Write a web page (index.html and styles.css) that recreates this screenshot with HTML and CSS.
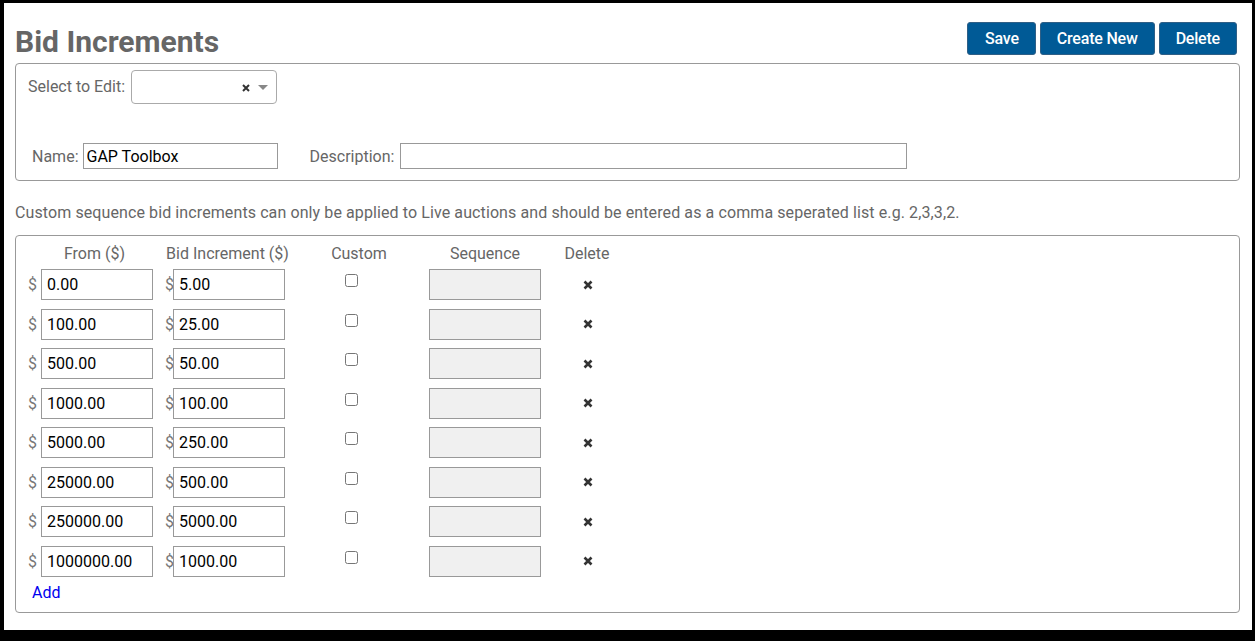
FILE: index.html
```html
<!DOCTYPE html>
<html>
<head>
<meta charset="utf-8">
<link rel="stylesheet" href="styles.css">
</head>
<body>
<div class="page">
  <div class="header">
    <h1 class="title">Bid Increments</h1>
    <div class="actions">
      <button class="btn btn-save">Save</button>
      <button class="btn">Create New</button>
      <button class="btn">Delete</button>
    </div>
  </div>

  <div class="panel panel-top">
    <div class="select-row">
      <span class="label">Select to Edit:</span>
      <div class="select">
        <svg class="clear" width="8" height="8" viewBox="0 0 8 8"><path d="M1 1L7 7M7 1L1 7" stroke="#333" stroke-width="2"/></svg>
        <span class="caret"></span>
      </div>
    </div>
    <div class="name-row">
      <span class="label">Name:</span>
      <input class="field name-field" type="text" value="GAP Toolbox">
      <span class="label desc-label">Description:</span>
      <input class="field desc-field" type="text" value="">
    </div>
  </div>

  <p class="note">Custom sequence bid increments can only be applied to Live auctions and should be entered as a comma seperated list e.g. 2,3,3,2.</p>

  <div class="panel panel-table">
    <div class="grid-row head">
      <div class="th">From ($)</div>
      <div class="th">Bid Increment ($)</div>
      <div class="th">Custom</div>
      <div class="th">Sequence</div>
      <div class="th">Delete</div>
    </div>
    <div class="rows">
      <div class="grid-row">
        <div class="cell c1"><span class="cur">$</span><input class="field num" value="0.00"></div>
        <div class="cell c2"><span class="cur">$</span><input class="field num" value="5.00"></div>
        <div class="cell c3"><input type="checkbox" class="chk"></div>
        <div class="cell c4"><input class="field seq" disabled></div>
        <div class="cell c5"><svg width="10" height="10" viewBox="0 0 10 10"><path d="M1.5 1.5L8.5 8.5M8.5 1.5L1.5 8.5" stroke="#333" stroke-width="2.6"/></svg></div>
      </div>
      <div class="grid-row">
        <div class="cell c1"><span class="cur">$</span><input class="field num" value="100.00"></div>
        <div class="cell c2"><span class="cur">$</span><input class="field num" value="25.00"></div>
        <div class="cell c3"><input type="checkbox" class="chk"></div>
        <div class="cell c4"><input class="field seq" disabled></div>
        <div class="cell c5"><svg width="10" height="10" viewBox="0 0 10 10"><path d="M1.5 1.5L8.5 8.5M8.5 1.5L1.5 8.5" stroke="#333" stroke-width="2.6"/></svg></div>
      </div>
      <div class="grid-row">
        <div class="cell c1"><span class="cur">$</span><input class="field num" value="500.00"></div>
        <div class="cell c2"><span class="cur">$</span><input class="field num" value="50.00"></div>
        <div class="cell c3"><input type="checkbox" class="chk"></div>
        <div class="cell c4"><input class="field seq" disabled></div>
        <div class="cell c5"><svg width="10" height="10" viewBox="0 0 10 10"><path d="M1.5 1.5L8.5 8.5M8.5 1.5L1.5 8.5" stroke="#333" stroke-width="2.6"/></svg></div>
      </div>
      <div class="grid-row">
        <div class="cell c1"><span class="cur">$</span><input class="field num" value="1000.00"></div>
        <div class="cell c2"><span class="cur">$</span><input class="field num" value="100.00"></div>
        <div class="cell c3"><input type="checkbox" class="chk"></div>
        <div class="cell c4"><input class="field seq" disabled></div>
        <div class="cell c5"><svg width="10" height="10" viewBox="0 0 10 10"><path d="M1.5 1.5L8.5 8.5M8.5 1.5L1.5 8.5" stroke="#333" stroke-width="2.6"/></svg></div>
      </div>
      <div class="grid-row">
        <div class="cell c1"><span class="cur">$</span><input class="field num" value="5000.00"></div>
        <div class="cell c2"><span class="cur">$</span><input class="field num" value="250.00"></div>
        <div class="cell c3"><input type="checkbox" class="chk"></div>
        <div class="cell c4"><input class="field seq" disabled></div>
        <div class="cell c5"><svg width="10" height="10" viewBox="0 0 10 10"><path d="M1.5 1.5L8.5 8.5M8.5 1.5L1.5 8.5" stroke="#333" stroke-width="2.6"/></svg></div>
      </div>
      <div class="grid-row">
        <div class="cell c1"><span class="cur">$</span><input class="field num" value="25000.00"></div>
        <div class="cell c2"><span class="cur">$</span><input class="field num" value="500.00"></div>
        <div class="cell c3"><input type="checkbox" class="chk"></div>
        <div class="cell c4"><input class="field seq" disabled></div>
        <div class="cell c5"><svg width="10" height="10" viewBox="0 0 10 10"><path d="M1.5 1.5L8.5 8.5M8.5 1.5L1.5 8.5" stroke="#333" stroke-width="2.6"/></svg></div>
      </div>
      <div class="grid-row">
        <div class="cell c1"><span class="cur">$</span><input class="field num" value="250000.00"></div>
        <div class="cell c2"><span class="cur">$</span><input class="field num" value="5000.00"></div>
        <div class="cell c3"><input type="checkbox" class="chk"></div>
        <div class="cell c4"><input class="field seq" disabled></div>
        <div class="cell c5"><svg width="10" height="10" viewBox="0 0 10 10"><path d="M1.5 1.5L8.5 8.5M8.5 1.5L1.5 8.5" stroke="#333" stroke-width="2.6"/></svg></div>
      </div>
      <div class="grid-row">
        <div class="cell c1"><span class="cur">$</span><input class="field num" value="1000000.00"></div>
        <div class="cell c2"><span class="cur">$</span><input class="field num" value="1000.00"></div>
        <div class="cell c3"><input type="checkbox" class="chk"></div>
        <div class="cell c4"><input class="field seq" disabled></div>
        <div class="cell c5"><svg width="10" height="10" viewBox="0 0 10 10"><path d="M1.5 1.5L8.5 8.5M8.5 1.5L1.5 8.5" stroke="#333" stroke-width="2.6"/></svg></div>
      </div>
    </div>
    <a class="add" href="#">Add</a>
  </div>
</div>
</body>
</html>
```

FILE: styles.css
```css
html, body {
  margin: 0;
  padding: 0;
  background: #000;
}
body {
  font-family: Roboto, "Liberation Sans", Arial, sans-serif;
  color: #666;
  font-size: 16px;
}
.page {
  background: #fff;
  margin: 3px 3px 0 4px;
  height: 627px;
  padding: 19px 12px 0 11px;
  box-sizing: border-box;
}
.header {
  display: flex;
  justify-content: space-between;
  align-items: flex-start;
  height: 33px;
}
.title {
  margin: 3px 0 0 0;
  font-size: 30px;
  line-height: 33px;
  font-weight: 700;
  color: #666;
}
.actions {
  display: flex;
  gap: 4px;
  margin-right: 3px;
}
.btn {
  height: 33px;
  padding: 0 16px;
  background: #005a96;
  border: 1px solid #2f5f86;
  border-radius: 3px;
  color: #fff;
  font-family: Roboto, "Liberation Sans", Arial, sans-serif;
  font-size: 16px;
  font-weight: 500;
  letter-spacing: -0.2px;
}
.btn-save {
  padding: 0 16px 0 17px;
}
.panel {
  border: 1px solid #999;
  border-radius: 4px;
}
.panel-top {
  margin-top: 8px;
  height: 118px;
  box-sizing: border-box;
  padding: 6px 12px 0 12px;
}
.select-row {
  display: flex;
  align-items: center;
}
.label {
  color: #666;
  line-height: 19px;
}
.select-row .label {
  margin-top: -1px;
}
.select {
  margin-left: 6px;
  width: 146px;
  height: 34px;
  box-sizing: border-box;
  border: 1px solid #aaa;
  border-radius: 4px;
  display: flex;
  align-items: center;
  justify-content: flex-end;
  padding-right: 8px;
}
.clear {
  margin-right: 8px;
  margin-top: 2px;
}
.caret {
  width: 0;
  height: 0;
  border-left: 5px solid transparent;
  border-right: 5px solid transparent;
  border-top: 5px solid #888;
}
.name-row {
  display: flex;
  align-items: center;
  margin-top: 39px;
  padding-left: 4px;
}
.field {
  box-sizing: border-box;
  border: 1px solid #999;
  font-family: Roboto, "Liberation Sans", Arial, sans-serif;
  font-size: 16px;
  color: #000;
  padding: 0 4px;
  margin: 0;
  background: #fff;
  border-radius: 0;
  outline: none;
}
.name-field {
  width: 195px;
  height: 26px;
  margin-left: 4px;
  padding-left: 3px;
}
.desc-label {
  margin-left: 32px;
}
.desc-field {
  width: 507px;
  height: 26px;
  margin-left: 6px;
}
.note {
  margin: 22px 0 12px 0;
  font-size: 16px;
  letter-spacing: 0.1px;
  line-height: 20px;
  color: #666;
}
.panel-table {
  padding: 8px 0 10px 12px;
}
.grid-row {
  display: grid;
  grid-template-columns: 133px 133px 130px 122px 82px;
}
.head {
  line-height: 19px;
}
.th {
  text-align: center;
  color: #666;
}
.rows {
  margin-top: 6px;
  display: flex;
  flex-direction: column;
  gap: 8.57px;
}
.cell {
  display: flex;
  align-items: center;
  height: 31px;
}
.cur {
  color: #777;
  width: 9px;
}
.c1 .num {
  margin-left: 4px;
}
.c2 {
  padding-left: 4px;
}
.c2 .num {
  margin-left: -1px;
}
.num {
  width: 112px;
  height: 31px;
  padding-left: 5px;
}
.c3 {
  align-items: flex-start;
}
.chk {
  margin: 5px 0 0 51px;
  width: 13px;
  height: 13px;
}
.c4 {
  justify-content: center;
}
.seq {
  width: 112px;
  height: 31px;
  background: #f0f0f0;
}
.c5 {
  justify-content: center;
  padding-left: 2px;
}
.add {
  display: inline-block;
  margin-top: 6px;
  margin-left: 4px;
  color: #0000ee;
  text-decoration: none;
  line-height: 19px;
}
```
